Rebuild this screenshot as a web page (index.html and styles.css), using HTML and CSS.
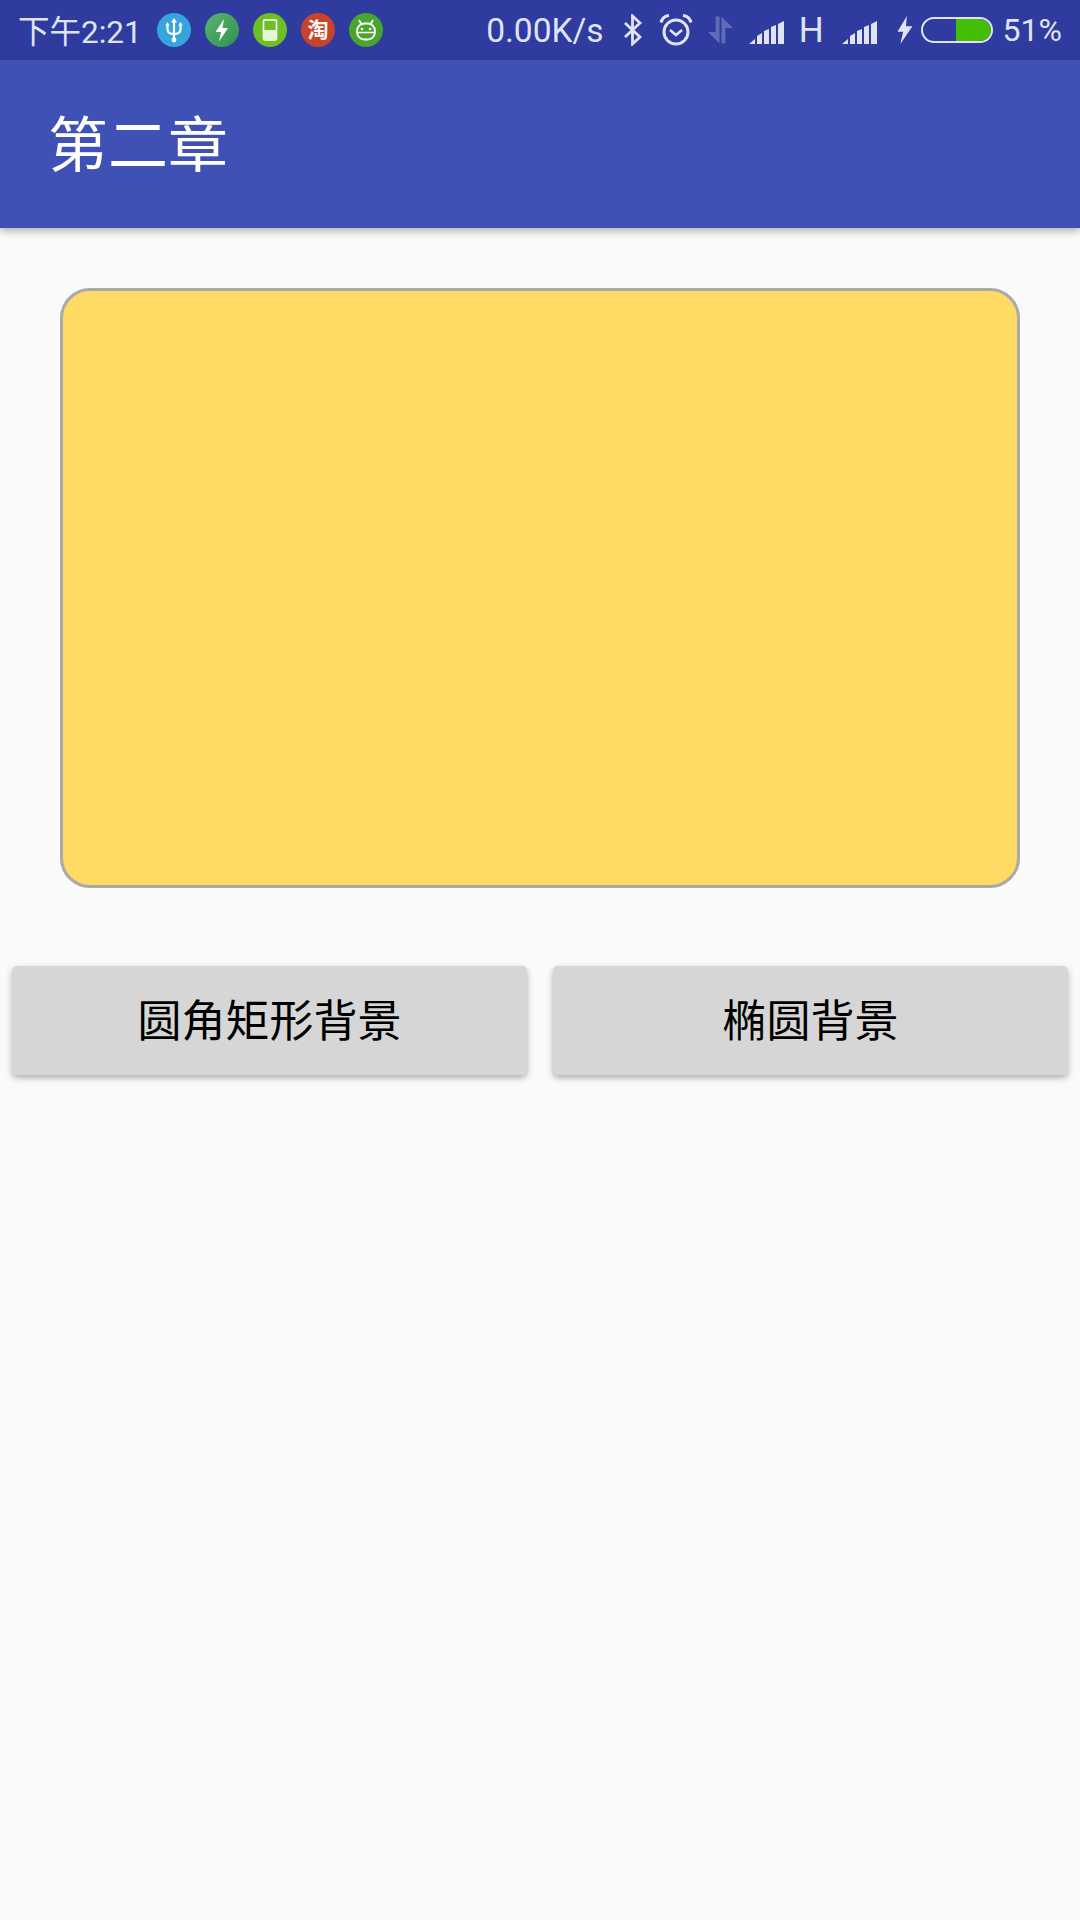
FILE: index.html
```html
<!DOCTYPE html>
<html lang="zh-CN">
<head>
    <meta charset="UTF-8">
    <title>第二章</title>
    <link rel="stylesheet" href="styles.css">
</head>
<body>
    <div class="status-bar">
        <div class="status-left">
            <span class="time">下午2:21</span>
            <div class="app-icons">
                <!-- usb -->
                <svg class="app-icon" viewBox="0 0 34 34">
                    <circle cx="17" cy="17" r="17" fill="#37a5dd"/>
                    <path d="M17 8v19M10.500 12v4c0 3.500 3 5 6.500 5s6.500-1.500 6.500-5v-4" fill="none" stroke="#fff" stroke-width="2.200"/>
                    <path d="M17 5l-3 4.500h6zM10.500 9l-2.200 3.500h4.400zM23.500 9l-2.200 3.500h4.400z" fill="#fff"/>
                    <circle cx="17" cy="27" r="2.400" fill="#fff"/>
                </svg>
                <!-- flash -->
                <svg class="app-icon" viewBox="0 0 34 34">
                    <defs>
                        <linearGradient id="flash-bg" x1="0" y1="0" x2="1" y2="1">
                            <stop offset="0" stop-color="#5bb56b"/>
                            <stop offset="1" stop-color="#2f9150"/>
                        </linearGradient>
                    </defs>
                    <circle cx="17" cy="17" r="17" fill="url(#flash-bg)"/>
                    <path d="M19 6l-8.500 13h5.500l-2 9.500 9-13.500h-5.500z" fill="#fff"/>
                </svg>
                <!-- battery app -->
                <svg class="app-icon" viewBox="0 0 34 34">
                    <circle cx="17" cy="17" r="17" fill="#6cc024"/>
                    <rect x="10.500" y="7" width="13" height="20" rx="1.500" fill="none" stroke="#fff" stroke-width="1.600"/>
                    <rect x="10.500" y="17" width="13" height="10" fill="#e8f5d5"/>
                </svg>
                <!-- taobao -->
                <div class="app-icon taobao">淘</div>
                <!-- android face -->
                <svg class="app-icon" viewBox="0 0 34 34">
                    <circle cx="17" cy="17" r="17" fill="#4aa52e"/>
                    <path d="M10 7l2.500 4.500M24 7l-2.500 4.500" stroke="#fff" stroke-width="1.800"/>
                    <rect x="8" y="10.500" width="18" height="16" rx="7.500" fill="none" stroke="#fff" stroke-width="1.800"/>
                    <path d="M8.500 19.500h17" stroke="#fff" stroke-width="1.500"/>
                    <circle cx="13" cy="16" r="1.300" fill="#fff"/>
                    <circle cx="21" cy="16" r="1.300" fill="#fff"/>
                </svg>
            </div>
        </div>
        <div class="status-right">
            <span class="speed">0.00K/s</span>
            <svg class="ic-bt" viewBox="0 0 20 32">
                <path d="M2 9l15 14-7.500 7V2L17 9 2 23" fill="none" stroke="#dfe3f5" stroke-width="2.800"/>
            </svg>
            <svg class="ic-alarm" viewBox="0 0 34 34">
                <circle cx="17" cy="19" r="12" fill="none" stroke="#dfe3f5" stroke-width="3"/>
                <path d="M11 17l6 5 6-5" fill="none" stroke="#dfe3f5" stroke-width="2.600"/>
                <path d="M2 9.500C3 5.500 6 3 10 2.500M32 9.500C31 5.500 28 3 24 2.500" fill="none" stroke="#dfe3f5" stroke-width="3.200"/>
            </svg>
            <svg class="ic-data" viewBox="0 0 28 30">
                <path d="M13 1v28L1 17h8V1zM15 29V1l12 12h-8v16z" fill="#5f6db8"/>
            </svg>
            <svg class="ic-signal" viewBox="0 0 38 24">
                <path d="M0 24l6-5v5zM8 24v-8l5-3v11zM15 24V11l5-2v15zM22 24V7l5-2v19zM29 24V4l6-3v23z" fill="#dfe3f5"/>
            </svg>
            <span class="net-type">H</span>
            <svg class="ic-signal second" viewBox="0 0 38 24">
                <path d="M0 24l6-5v5zM8 24v-8l5-3v11zM15 24V11l5-2v15zM22 24V7l5-2v19zM29 24V4l6-3v23z" fill="#dfe3f5"/>
            </svg>
            <svg class="ic-bolt" viewBox="0 0 16 30">
                <path d="M10 0L0 17h6l-3 13L16 11H9z" fill="#dfe3f5"/>
            </svg>
            <div class="battery"><div class="battery-fill" style="width: 51%"></div></div>
            <span class="percent">51%</span>
        </div>
    </div>

    <div class="toolbar">
        <h1>第二章</h1>
    </div>

    <div class="content">
        <div class="shape-box"></div>
        <div class="button-row">
            <button type="button">圆角矩形背景</button>
            <button type="button">椭圆背景</button>
        </div>
    </div>
</body>
</html>
```

FILE: styles.css
```css
body {
    margin: 0;
    padding: 0;
    height: 1920px;
    overflow: hidden;
    background-color: #fafafa;
    font-family: Roboto, "Noto Sans CJK SC", sans-serif;
}
.status-bar {
    height: 60px;
    background-color: #2f3b9e;
    color: #dfe3f5;
    display: flex;
    justify-content: space-between;
    align-items: center;
    font-size: 32px;
}
.status-left {
    display: flex;
    align-items: center;
    padding-left: 18px;
}
.time {
    width: 139px;
    font-size: 31.500px;
    margin-top: -2px;
}
.app-icons {
    display: flex;
    gap: 14px;
}
.app-icon {
    width: 34px;
    height: 34px;
    display: block;
}
.taobao {
    background-color: #c8432a;
    border-radius: 50%;
    color: #fff;
    font-size: 21px;
    font-weight: 700;
    line-height: 34px;
    text-align: center;
}
.status-right {
    display: flex;
    align-items: center;
    padding-right: 18px;
}
.speed {
    font-size: 33.500px;
    margin-right: 19px;
}
.ic-bt {
    width: 20px;
    height: 32px;
    margin-right: 16px;
}
.ic-alarm {
    width: 34px;
    height: 34px;
    margin-right: 14px;
}
.ic-data {
    width: 27px;
    height: 30px;
    margin-right: 15px;
}
.ic-signal {
    width: 38px;
    height: 24px;
    margin-top: 4px;
}
.net-type {
    font-size: 35px;
    margin: 0 18px 0 12px;
}
.ic-signal.second {
    margin-right: 17px;
}
.ic-bolt {
    width: 16px;
    height: 28px;
    margin-right: 8px;
}
.battery {
    width: 72px;
    height: 26px;
    box-sizing: border-box;
    border: 2px solid #dfe3f5;
    border-radius: 13px;
    display: flex;
    justify-content: flex-end;
    overflow: hidden;
    margin-right: 10px;
}
.battery-fill {
    background-color: #44bd07;
    border-radius: 0 11px 11px 0;
}
.toolbar {
    height: 168px;
    background-color: #3f51b5;
    box-shadow: 0 3px 8px rgba(0, 0, 0, 0.3);
    display: flex;
    align-items: center;
    padding-left: 48px;
    position: relative;
}
.toolbar h1 {
    margin: -8px 0 0;
    color: #fff;
    font-size: 60px;
    font-weight: 400;
}
.content {
    padding: 60px 12px 0;
}
.shape-box {
    height: 600px;
    margin: 0 48px;
    box-sizing: border-box;
    background-color: #ffdb66;
    border: 3px solid #aaaaaa;
    border-radius: 30px;
}
.button-row {
    display: flex;
    gap: 26px;
    margin-top: 78px;
}
button {
    flex: 1;
    height: 109px;
    padding: 0 0 6px;
    border: none;
    border-radius: 5px;
    background-color: #d6d6d6;
    box-shadow: 0 3px 6px rgba(0, 0, 0, 0.3);
    color: #000;
    font-family: "Noto Sans CJK SC", sans-serif;
    font-size: 44px;
}
```
